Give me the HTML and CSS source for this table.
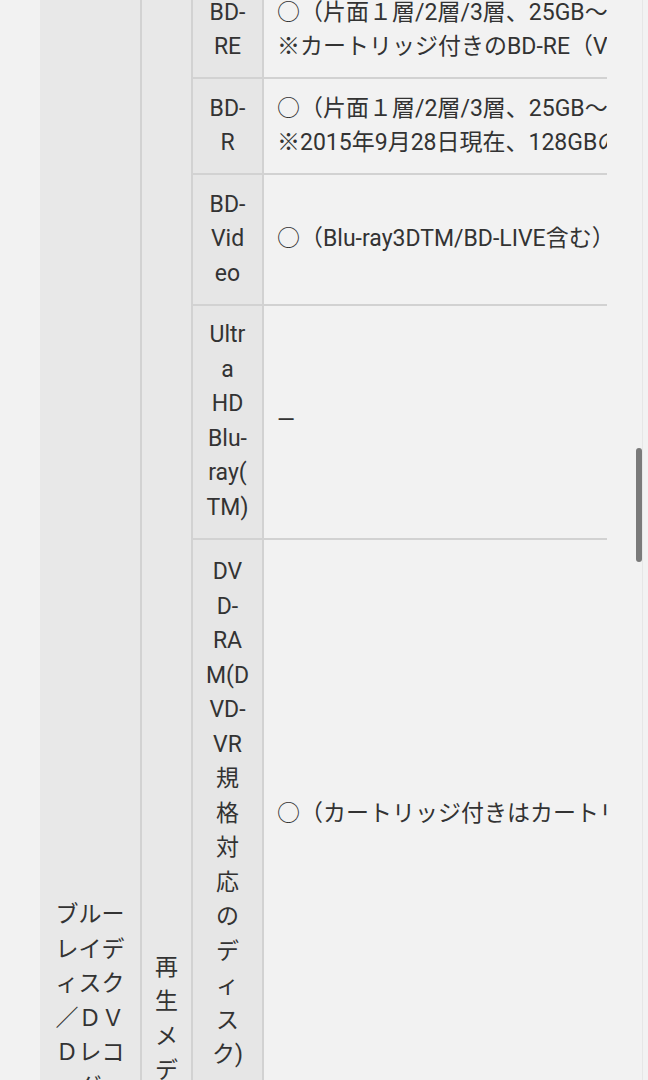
FILE: index.html
```html
<!DOCTYPE html>
<html lang="ja">
<head>
<meta charset="utf-8">
<title>仕様 | ブルーレイディスク／ＤＶＤレコーダー</title>
<link rel="stylesheet" href="styles.css">
</head>
<body>
<main class="page">
  <div class="spec-scroll">
    <table class="spec">
      <tbody>
        <tr>
          <th class="cat" rowspan="8">ブルーレイディスク／ＤＶＤレコーダー</th>
          <th class="sub" rowspan="8">再生メディア</th>
          <th class="media">BD-RE</th>
          <td class="val">○（片面１層/2層/3層、25GB～128GB）<br>※カートリッジ付きのBD-RE（Ver.1.0）には対応していません</td>
        </tr>
        <tr>
          <th class="media">BD-R</th>
          <td class="val">○（片面１層/2層/3層、25GB～128GB）<br>※2015年9月28日現在、128GBのBD-R XLディスクに対応</td>
        </tr>
        <tr>
          <th class="media">BD-Video</th>
          <td class="val">○（Blu-ray3DTM/BD-LIVE含む）</td>
        </tr>
        <tr>
          <th class="media">Ultra HD Blu-ray(TM)</th>
          <td class="val">—</td>
        </tr>
        <tr>
          <th class="media media-long">DVD-RAM(DVD-VR規格対応のディスク)</th>
          <td class="val">○（カートリッジ付きはカートリッジから取り出して使用）</td>
        </tr>
        <tr>
          <th class="media">DVD-R</th>
          <td class="val">○（DVD-Video/DVD-VR/AVCREC方式）</td>
        </tr>
        <tr>
          <th class="media">DVD-RW</th>
          <td class="val">○（DVD-Video/DVD-VR方式）</td>
        </tr>
        <tr>
          <th class="media">+R</th>
          <td class="val">○（DVD-Video方式）</td>
        </tr>
      </tbody>
    </table>
  </div>
</main>
<div class="scroll-track" aria-hidden="true"></div>
<div class="scroll-thumb" aria-hidden="true"></div>
</body>
</html>
```

FILE: styles.css
```css
html {
  overflow: hidden;
  background: #f2f2f2;
}

body {
  margin: 0;
  font-family: Roboto, "Noto Sans CJK JP", sans-serif;
  font-size: 23px;
  line-height: 1.5;
  color: #333333;
}

.page {
  display: block;
}

/* page is scrolled: the first visible row starts just above the viewport */
.spec-scroll {
  margin: -17px 41px 0 40px;
  overflow: hidden;
}

.spec {
  border-collapse: separate;
  border-spacing: 0;
  width: max-content;
}

.spec th,
.spec td {
  padding: 12.5px 13px;
  font-weight: 400;
  overflow-wrap: anywhere;
}

.spec .cat,
.spec .sub,
.spec .media {
  background: #e8e8e8;
  border-right: 2px solid #d2d2d2;
  text-align: center;
}

.spec .cat {
  width: 74px;
  vertical-align: top;
  padding-top: 915px;
}

.spec .sub {
  width: 23px;
  vertical-align: top;
  padding-top: 967.6px;
}

.spec .media {
  width: 44px;
  padding-left: 12.5px;
  padding-right: 12.5px;
  vertical-align: middle;
  background: #e6e6e6;
  border-bottom: 2px solid #d2d2d2;
}

.spec .media-long {
  padding-top: 15.5px;
  padding-bottom: 15.5px;
}

.spec .val {
  text-align: left;
  vertical-align: middle;
  white-space: nowrap;
  border-bottom: 2px solid #d2d2d2;
}

.scroll-track {
  position: fixed;
  top: 0;
  bottom: 0;
  left: 642px;
  width: 1px;
  background: #e6e6e6;
}

.scroll-thumb {
  position: fixed;
  left: 636px;
  top: 448px;
  width: 6px;
  height: 114px;
  border-radius: 3px;
  background: #7a7a7a;
}
```
